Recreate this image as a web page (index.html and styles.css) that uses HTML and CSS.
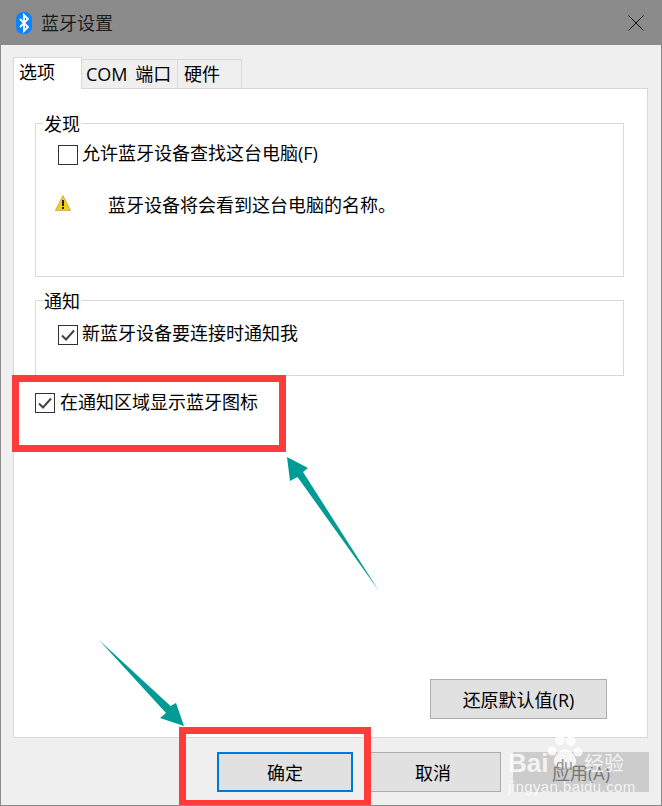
FILE: index.html
```html
<!DOCTYPE html>
<html>
  <head>
    <meta charset="UTF-8" />
    <title>蓝牙设置</title>
    <link rel="stylesheet" href="styles.css">
  </head>
  <body>
    <div class="window">
      <div class="titlebar">
        <svg class="bt-icon" width="16" height="22" viewBox="0 0 16 22">
          <rect width="16" height="22" rx="7" fill="#0a84ff" />
          <path d="M4 7l8 8-4 4V3l4 4-8 8" fill="none" stroke="#fff" stroke-width="1.8" />
        </svg>
        <span class="title">蓝牙设置</span>
        <svg class="close" width="16" height="16" viewBox="0 0 16 16">
          <path d="M0.5 0.5l15 15M15.5 0.5l-15 15" stroke="#111" stroke-width="1" fill="none" />
        </svg>
      </div>
      <div class="tabs">
        <div class="tab active">选项</div>
        <div class="tab com">COM 端口</div>
        <div class="tab hw">硬件</div>
      </div>
      <div class="panel">
        <fieldset class="group group-find">
          <legend>发现</legend>
          <div class="check-row">
            <span class="box"></span>
            <span class="label">允许蓝牙设备查找这台电脑(F)</span>
          </div>
          <div class="warn-row">
            <svg class="warn" width="16" height="16" viewBox="0 0 16 16">
              <path d="M8 0.5L15.7 15.5H0.3z" fill="#f2cf1a" stroke="#b59a1a" stroke-width="0.6" />
              <rect x="7" y="5" width="2" height="6" fill="#222" />
              <rect x="7" y="12" width="2" height="2" fill="#222" />
            </svg>
            <span class="warn-text">蓝牙设备将会看到这台电脑的名称。</span>
          </div>
        </fieldset>
        <fieldset class="group group-notify">
          <legend>通知</legend>
          <div class="check-row">
            <span class="box">
              <svg width="18" height="18" viewBox="0 0 18 18"><path d="M3 9.5l4 4 8-9" fill="none" stroke="#444" stroke-width="2" /></svg>
            </span>
            <span class="label">新蓝牙设备要连接时通知我</span>
          </div>
        </fieldset>
        <div class="check-row tray-row">
          <span class="box">
            <svg width="18" height="18" viewBox="0 0 18 18"><path d="M3 9.5l4 4 8-9" fill="none" stroke="#444" stroke-width="2" /></svg>
          </span>
          <span class="tray-label">在通知区域显示蓝牙图标</span>
        </div>
        <div class="restore-row">
          <button class="button restore">还原默认值(R)</button>
        </div>
      </div>
      <div class="footer">
        <button class="button ok">确定</button>
        <button class="button">取消</button>
        <button class="button disabled">应用(A)</button>
      </div>

      <!-- annotations drawn over the screenshot -->
      <div class="mark mark-tray"></div>
      <div class="mark mark-ok"></div>
      <svg class="arrows" width="662" height="806" viewBox="0 0 662 806">
        <polygon points="287,457 308,468 303,472 379,591 297.5,477 290,481" fill="#009b95" />
        <polygon points="99,640 170.5,706 176,703 184,726 160,718 166,713" fill="#009b95" />
      </svg>

      <div class="watermark">
        <svg class="paw" width="36" height="38" viewBox="0 0 36 38">
          <circle cx="5" cy="17" r="4.5" />
          <circle cx="13" cy="6" r="5" />
          <circle cx="24" cy="7" r="5" />
          <circle cx="31" cy="18" r="4.5" />
          <path d="M18 15c-5 0-10 6-11 11-1 6 4 8 11 8s12-2 11-8c-1-5-6-11-11-11z" />
        </svg>
        <span class="wm-bai">Bai</span>
        <span class="wm-du">du</span>
        <span class="wm-cn">经验</span>
        <span class="wm-url">jingyan.baidu.com</span>
      </div>
    </div>
  </body>
</html>
```

FILE: styles.css
```css
/* Dialog frame */
body {
  margin: 0;
  padding: 0;
  font-family: "Open Sans", "Noto Sans CJK SC", sans-serif;
  font-size: 18px;
  color: #000;
}
.window {
  position: relative;
  width: 662px;
  height: 806px;
  box-sizing: border-box;
  display: flex;
  flex-direction: column;
  background-color: #efefef;
  border: 1px solid #8a8a8a;
  overflow: hidden;
}
.titlebar {
  display: flex;
  align-items: center;
  height: 45px;
  flex: none;
  background-color: #8b8b8b;
  padding: 0 17px 0 15px;
  margin-top: -1px;
}
.bt-icon {
  margin-right: 9px;
}
.title {
  flex: 1;
  line-height: 24px;
  color: #1c1c1c;
}

/* Tabs */
.tabs {
  display: flex;
  align-items: flex-end;
  height: 43px;
  flex: none;
  padding-left: 12px;
}
.tab {
  box-sizing: border-box;
  height: 29px;
  line-height: 29px;
  border: 1px solid #d9d9d9;
  border-bottom: none;
  border-left: none;
  padding: 0 5px;
  position: relative;
}
.tab.active {
  width: 69px;
  height: 32px;
  line-height: 29px;
  background-color: #fff;
  border-left: 1px solid #d9d9d9;
  padding-left: 5px;
  margin-bottom: -1px;
  z-index: 1;
}
.tab.com {
  width: 96px;
  padding-left: 4px;
  word-spacing: 3px;
  white-space: nowrap;
}
.tab.hw {
  width: 64px;
  padding-left: 6px;
}

/* Panel and group boxes */
.panel {
  box-sizing: border-box;
  width: 635px;
  height: 650px;
  flex: none;
  margin-left: 12px;
  padding: 22px 23px 18px 21px;
  background-color: #fff;
  border: 1px solid #d9d9d9;
  display: flex;
  flex-direction: column;
}
.group {
  margin: 0;
  padding: 0 0 0 22px;
  border: 1px solid #d9d9d9;
  min-width: 0;
  flex: none;
}
.group legend {
  padding: 2px 1px 0;
  margin-left: -15px;
  line-height: 22px;
}
.group-find {
  height: 166px;
  box-sizing: border-box;
}
.group-notify {
  height: 88px;
  box-sizing: border-box;
  margin-top: 11px;
}
.group-notify .check-row {
  margin-top: 10px;
}
.check-row {
  display: flex;
  align-items: flex-start;
  gap: 4px;
  line-height: 24px;
  margin-top: 7px;
}
.label {
  margin-top: -1px;
}
.box {
  box-sizing: border-box;
  width: 20px;
  height: 20px;
  flex: none;
  margin-top: 3px;
  border: 1px solid #333;
  background-color: #fff;
  display: flex;
}
.warn-row {
  display: flex;
  align-items: center;
  margin: 24px 0 0 -3px;
  line-height: 24px;
}
.warn {
  margin-right: 37px;
  flex: none;
}
.warn-text {
  padding-top: 4px;
}
.tray-row {
  margin-top: 14px;
  gap: 5px;
}

/* Buttons */
.restore-row {
  margin-top: auto;
  display: flex;
  justify-content: flex-end;
  padding-right: 17px;
}
.button {
  box-sizing: border-box;
  width: 136px;
  height: 40px;
  padding: 0;
  font-family: inherit;
  font-size: 18px;
  color: #000;
  background-color: #e1e1e1;
  border: 1px solid #adadad;
}
.button.restore {
  width: 177px;
}
.footer {
  display: flex;
  justify-content: flex-end;
  gap: 12px;
  padding: 14px 12px 0 0;
}
.button.ok {
  border: 2px solid #0078d7;
}
.button.disabled {
  background-color: #cccccc;
  border-color: #cccccc;
  color: #777;
}

/* Annotations */
.mark {
  position: absolute;
  box-sizing: border-box;
  border: 7px solid #ff3b3b;
}
.mark-tray {
  left: 11px;
  top: 374px;
  width: 274px;
  height: 77px;
}
.mark-ok {
  left: 178px;
  top: 726px;
  width: 192px;
  height: 80px;
}
.arrows {
  position: absolute;
  left: -1px;
  top: -1px;
}

/* Watermark */
.watermark {
  position: absolute;
  left: 505px;
  top: 730px;
  width: 130px;
  height: 70px;
  color: rgba(255, 255, 255, 0.8);
  font-family: "Liberation Sans", sans-serif;
}
.paw {
  position: absolute;
  left: 41px;
  top: 3px;
  fill: rgba(255, 255, 255, 0.8);
}
.wm-bai {
  position: absolute;
  left: 2px;
  top: 17px;
  font-size: 26px;
  font-weight: bold;
  line-height: 30px;
}
.wm-du {
  position: absolute;
  left: 50px;
  top: 25px;
  font-size: 15px;
  line-height: 18px;
  color: #8f8f8f;
}
.wm-cn {
  position: absolute;
  left: 78px;
  top: 18px;
  font-family: "Noto Sans CJK SC", sans-serif;
  font-size: 20px;
  line-height: 28px;
}
.wm-url {
  position: absolute;
  left: 2px;
  top: 47px;
  font-size: 15px;
  letter-spacing: 0.4px;
  line-height: 18px;
  white-space: nowrap;
}
```
